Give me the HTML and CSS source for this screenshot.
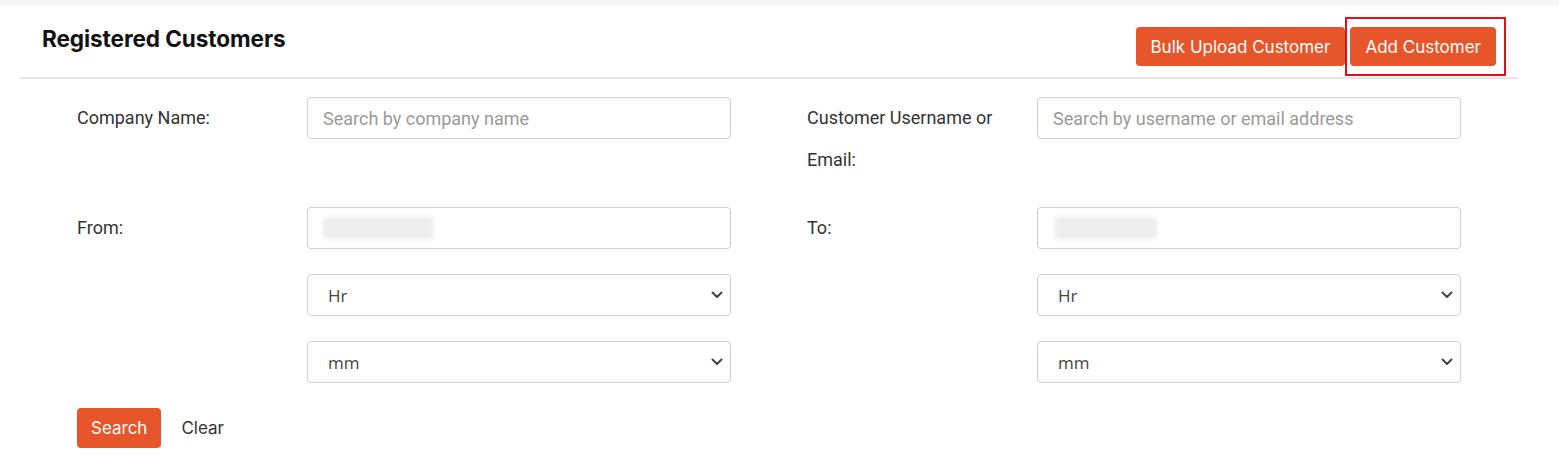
FILE: index.html
```html
<!DOCTYPE html>
<html lang="en">
<head>
<meta charset="utf-8">
<title>Registered Customers</title>
<link rel="stylesheet" href="styles.css">
</head>
<body>
<div class="topband"></div>
<header class="head">
  <h1 class="title">Registered Customers</h1>
  <div class="actions">
    <button class="btn">Bulk Upload Customer</button>
    <span class="highlight"><button class="btn">Add Customer</button></span>
  </div>
</header>
<form class="filters">
  <label class="lbl">Company Name:</label>
  <input class="field" type="text" placeholder="Search by company name">
  <label class="lbl lbl-r lbl-wrap">Customer Username or Email:</label>
  <input class="field" type="text" placeholder="Search by username or email address">

  <label class="lbl">From:</label>
  <div class="field date"><span class="blur"></span></div>
  <label class="lbl lbl-r">To:</label>
  <div class="field date"><span class="blur blur-r"></span></div>

  <div></div>
  <select class="field sel"><option>Hr</option></select>
  <div></div>
  <select class="field sel"><option>Hr</option></select>

  <div></div>
  <select class="field sel"><option>mm</option></select>
  <div></div>
  <select class="field sel"><option>mm</option></select>

  <div class="buttons">
    <button type="button" class="btn btn-search">Search</button>
    <button type="button" class="link">Clear</button>
  </div>
</form>
</body>
</html>
```
FILE: styles.css
```css
* { box-sizing: border-box; }
html, body { margin: 0; padding: 0; background: #fff; }
body { font-family: Roboto, "Noto Sans", sans-serif; color: #333; }

.topband { height: 6px; background: linear-gradient(#f3f3f3, #f8f8f8); }

.head {
  margin-left: 20px;
  width: 1498px;
  padding: 11px 12px 1px 22px;
  border-bottom: 2px solid #e6e6e6;
  display: flex;
  justify-content: space-between;
  align-items: flex-start;
}
.title {
  margin: 8px 0 0;
  font-family: Inter, "Open Sans", sans-serif;
  font-weight: 700;
  font-size: 22.6px;
  line-height: 28px;
  color: #111;
  letter-spacing: -0.1px;
}
.actions { display: flex; align-items: center; }
.highlight {
  display: inline-flex;
  border: 2px solid #e3101b;
  padding: 8px 8px 8px 3px;
}
.btn {
  font-family: Inter, "Open Sans", sans-serif;
  font-size: 17px;
  font-weight: 400;
  color: #fff;
  background: #e6562a;
  border: none;
  border-radius: 4px;
  height: 39px;
  padding: 0 15px;
  cursor: pointer;
}

.filters {
  margin: 18px 0 0 77px;
  display: grid;
  grid-template-columns: 230px 424px 306px 424px;
  row-gap: 25px;
  align-items: start;
}
.lbl {
  font-size: 18px;
  line-height: 42px;
  color: #333;
}
.lbl-r { padding-left: 76px; }
.lbl-wrap { padding-bottom: 1px; }
.field {
  height: 42px;
  width: 424px;
  border: 1px solid #cfcfcf;
  border-radius: 4px;
  background: #fff;
  font-family: Roboto, sans-serif;
  font-size: 18px;
  padding: 0 15px;
  color: #555;
}
.field::placeholder { color: #9a9a9a; }
.date { display: flex; align-items: center; }
.blur {
  display: block;
  width: 110px;
  height: 22px;
  background: #ededed;
  filter: blur(2px);
}
.blur-r { width: 102px; margin-left: 2px; }
.sel {
  appearance: none;
  -webkit-appearance: none;
  font-family: "Open Sans", sans-serif;
  font-size: 17px;
  color: #444;
  padding-left: 20px;
  background-image: url("data:image/svg+xml,%3Csvg xmlns='http://www.w3.org/2000/svg' width='12' height='8' viewBox='0 0 12 8'%3E%3Cpath d='M1.5 1.5 6 6 10.5 1.5' fill='none' stroke='%23444' stroke-width='2' stroke-linecap='round' stroke-linejoin='round'/%3E%3C/svg%3E");
  background-repeat: no-repeat;
  background-position: right 7px center;
  background-size: 12px 8px;
}
.buttons {
  grid-column: 1 / 3;
  display: flex;
  align-items: center;
  gap: 20px;
}
.btn-search { height: 40px; padding: 0 14px; }
.link {
  background: none;
  border: none;
  padding: 0;
  font-family: Inter, "Open Sans", sans-serif;
  font-size: 17px;
  color: #333;
  cursor: pointer;
}
```
